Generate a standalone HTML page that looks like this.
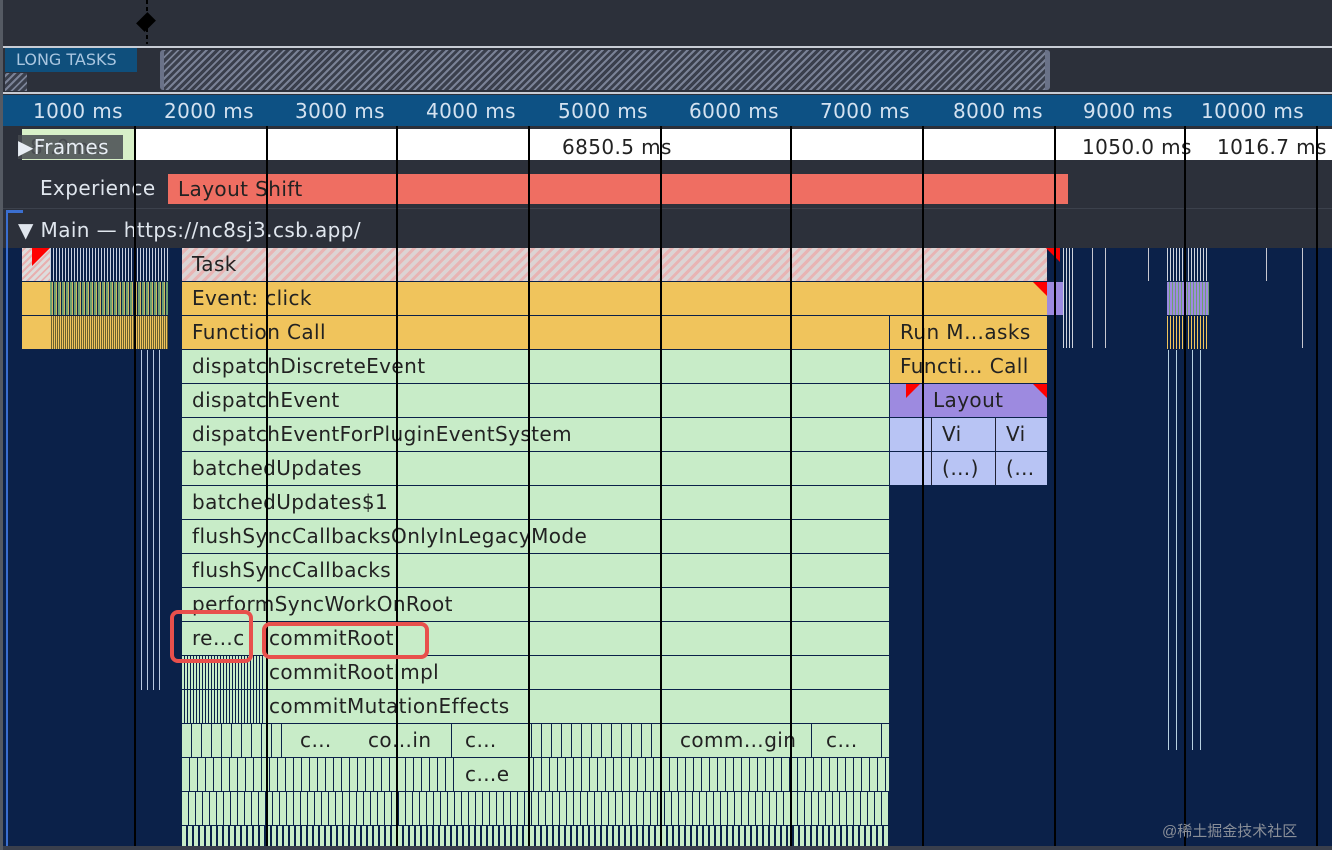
<!DOCTYPE html>
<html><head><meta charset="utf-8"><style>
*{margin:0;padding:0;box-sizing:border-box}
body{width:1332px;height:850px;overflow:hidden;background:#2c303a;font-family:"DejaVu Sans","Liberation Sans",sans-serif;position:relative;letter-spacing:0.4px}
.a{position:absolute}
.bar{position:absolute;height:33px;font-size:20px;line-height:33px;color:#222;padding-left:10px;white-space:nowrap;overflow:hidden}
.g{background:#c8ecc8}
.y{background:#f0c45c}
.p{background:#9d8ae0}
.lb{background:#b8c4f4}
.vl{position:absolute;top:126px;bottom:0;width:2px;background:#000}
.tick{position:absolute;top:95px;height:31px;line-height:33px;font-size:20px;color:#d4e2f0}
.st{background:repeating-linear-gradient(90deg,#c8ecc8 0 2px,#0b2149 2px 3px)}
</style></head><body>
<div class="a" style="left:0;top:0;width:3px;height:850px;background:#555a63"></div>
<div class="a" style="left:146px;top:0;width:2px;height:44px;background:repeating-linear-gradient(#000 0 4px,transparent 4px 7px)"></div>
<div class="a" style="left:138px;top:14px;width:16px;height:16px;background:#000;transform:rotate(45deg) scale(0.75,1)"></div>
<div class="a" style="left:3px;top:46px;width:1329px;height:2px;background:#c8ccd4"></div>
<div class="a" style="left:5px;top:48px;width:132px;height:24px;background:#0f4f7c;color:#a9c6e0;font-size:16px;line-height:24px;padding-left:11px;letter-spacing:0">LONG TASKS</div>
<div class="a" style="left:5px;top:73px;width:22px;height:18px;background:repeating-linear-gradient(-45deg,#7a8296 0 2px,#3a3f4c 2px 5px)"></div>
<div class="a" style="left:160px;top:50px;width:890px;height:40px;border-radius:3px;background:repeating-linear-gradient(-45deg,#7a8296 0 2px,#3a3f4c 2px 5px);border-left:4px solid #6a7288;border-right:5px solid #6a7288"></div>
<div class="a" style="left:3px;top:92px;width:1329px;height:2px;background:#c8ccd4"></div>
<div class="a" style="left:3px;top:95px;width:1329px;height:31px;background:#0d5184"></div>
<div class="tick" style="left:33px">1000 ms</div>
<div class="tick" style="left:164px">2000 ms</div>
<div class="tick" style="left:295px">3000 ms</div>
<div class="tick" style="left:426px">4000 ms</div>
<div class="tick" style="left:558px">5000 ms</div>
<div class="tick" style="left:689px">6000 ms</div>
<div class="tick" style="left:820px">7000 ms</div>
<div class="tick" style="left:953px">8000 ms</div>
<div class="tick" style="left:1083px">9000 ms</div>
<div class="tick" style="left:1201px">10000 ms</div>
<!-- frames -->
<div class="a" style="left:3px;top:126px;width:1329px;height:36px;background:#2c303a"></div>
<div class="a" style="left:22px;top:129px;width:113px;height:31px;background:#d8f0c8"></div>
<div class="a" style="left:135px;top:129px;width:1197px;height:31px;background:#fff"></div>
<div class="a" style="left:562px;top:129px;font-size:20px;line-height:36px;color:#222">6850.5 ms</div>
<div class="a" style="left:1082px;top:129px;font-size:20px;line-height:36px;color:#222">1050.0 ms</div>
<div class="a" style="left:1217px;top:129px;font-size:20px;line-height:36px;color:#222">1016.7 ms</div>
<div class="a" style="left:30px;top:129px;font-size:20px;line-height:36px;color:#555">8..0 ms</div>
<div class="a" style="left:18px;top:135px;width:105px;height:24px;background:rgba(70,74,80,.85)"></div>
<div class="a" style="left:18px;top:132px;font-size:20px;line-height:30px;color:#e8eef4">▶Frames</div>
<!-- experience -->
<div class="a" style="left:40px;top:172px;font-size:20px;line-height:33px;color:#e0e6ee">Experience</div>
<div class="bar" style="left:168px;top:174px;width:900px;height:30px;line-height:30px;background:#ef6e62">Layout Shift</div>
<div class="a" style="left:3px;top:208px;width:1329px;height:1px;background:#3c414c"></div>
<div class="a" style="left:7px;top:210px;width:16px;height:3px;background:#3b6fd0"></div>
<div class="a" style="left:18px;top:214px;font-size:20px;line-height:32px;color:#e0e6ee">▼ Main — https://nc8sj3.csb.app/</div>
<!-- flame -->
<div class="a" style="left:3px;top:248px;width:1329px;height:602px;background:#0b2149"></div>
<div class="a" style="left:6px;top:210px;width:2px;height:640px;background:#3b6fd0"></div>
<div class="a" style="left:22px;top:248px;width:28px;height:33px;background:repeating-linear-gradient(-45deg,#e8b0b0 0 2px,#ddd 2px 5px)"></div>
<div class="a" style="left:50px;top:248px;width:118px;height:33px;background:repeating-linear-gradient(90deg,#c8d0e0 0 1px,#0b2149 1px 3px)"></div>
<div class="a" style="left:22px;top:282px;width:28px;height:33px;background:#f0c45c"></div>
<div class="a" style="left:50px;top:282px;width:118px;height:33px;background:repeating-linear-gradient(90deg,#6fa070 0 2px,#d0b860 2px 3px,#0b2149 3px 4px)"></div>
<div class="a" style="left:22px;top:316px;width:28px;height:33px;background:#f0c45c"></div>
<div class="a" style="left:50px;top:316px;width:118px;height:33px;background:repeating-linear-gradient(90deg,#f0c45c 0 1px,#6a6030 1px 2px)"></div>
<div class="a" style="top:248px;width:0;height:0;border-top:18px solid #f00;border-left:18px solid transparent;transform:scaleX(-1);left:32px"></div>
<div class="a" style="left:135px;top:350px;width:28px;height:340px;background:repeating-linear-gradient(90deg,#b8c8e0 0 1px,#0b2149 1px 6px)"></div>
<!-- main column -->
<div class="bar" style="left:182px;top:248px;width:865px;background:repeating-linear-gradient(-45deg,#e8b4b4 0 3px,#dcd4d4 3px 7px)">Task</div>
<div class="bar y" style="left:182px;top:282px;width:865px">Event: click</div>
<div class="bar p" style="left:1047px;top:282px;width:16px"></div>
<div class="bar y" style="left:182px;top:316px;width:707px">Function Call</div>
<div class="bar y" style="left:890px;top:316px;width:157px">Run M…asks</div>
<div class="bar g" style="left:182px;top:350px;width:707px">dispatchDiscreteEvent</div>
<div class="bar y" style="left:890px;top:350px;width:157px">Functi… Call</div>
<div class="bar g" style="left:182px;top:384px;width:707px">dispatchEvent</div>
<div class="bar p" style="left:890px;top:384px;width:157px;padding-left:43px">Layout</div>
<div class="bar g" style="left:182px;top:418px;width:707px">dispatchEventForPluginEventSystem</div>
<div class="bar lb" style="left:890px;top:418px;width:157px"></div>
<div class="bar lb" style="left:931px;top:418px;width:63px;border-left:1px solid #223;">Vi</div>
<div class="bar lb" style="left:995px;top:418px;width:52px;border-left:1px solid #223;">Vi</div>
<div class="bar g" style="left:182px;top:452px;width:707px">batchedUpdates</div>
<div class="bar lb" style="left:890px;top:452px;width:157px"></div>
<div class="bar lb" style="left:931px;top:452px;width:63px;border-left:1px solid #223;">(…)</div>
<div class="bar lb" style="left:995px;top:452px;width:52px;border-left:1px solid #223;">(…</div>
<div class="bar g" style="left:182px;top:486px;width:707px">batchedUpdates$1</div>
<div class="bar g" style="left:182px;top:520px;width:707px">flushSyncCallbacksOnlyInLegacyMode</div>
<div class="bar g" style="left:182px;top:554px;width:707px">flushSyncCallbacks</div>
<div class="bar g" style="left:182px;top:588px;width:707px">performSyncWorkOnRoot</div>
<div class="bar g" style="left:182px;top:622px;width:707px"></div>
<div class="bar g" style="left:182px;top:622px;width:80px">re…c</div>
<div class="bar g" style="left:263px;top:622px;width:626px;padding-left:6px">commitRoot</div>
<div class="bar st" style="left:182px;top:656px;width:80px"></div>
<div class="bar g" style="left:263px;top:656px;width:626px;padding-left:6px">commitRootImpl</div>
<div class="bar st" style="left:182px;top:690px;width:80px"></div>
<div class="bar g" style="left:263px;top:690px;width:626px;padding-left:6px">commitMutationEffects</div>
<div class="bar st" style="left:182px;top:724px;width:707px;background:repeating-linear-gradient(90deg,#c8ecc8 0 9px,#0b2149 9px 10px)"></div>
<div class="bar g" style="left:290px;top:724px;width:64px">c…</div>
<div class="bar g" style="left:358px;top:724px;width:92px">co…in</div>
<div class="bar g" style="left:455px;top:724px;width:72px">c…</div>
<div class="bar g" style="left:670px;top:724px;width:140px">comm…gin</div>
<div class="bar g" style="left:816px;top:724px;width:60px">c…</div>
<div class="bar" style="left:182px;top:758px;width:707px;background:repeating-linear-gradient(90deg,#c8ecc8 0 7px,#0b2149 7px 8px)"></div>
<div class="bar g" style="left:455px;top:758px;width:72px">c…e</div>
<div class="bar" style="left:182px;top:792px;width:707px;background:repeating-linear-gradient(90deg,#c8ecc8 0 6px,#0b2149 6px 7px)"></div>
<div class="bar" style="left:182px;top:826px;width:707px;height:24px;background:repeating-linear-gradient(90deg,#c8ecc8 0 4px,#0b2149 4px 6px)"></div>
<!-- red triangles -->
<div class="a" style="left:1046px;top:248px;border-top:14px solid #f00;border-left:14px solid transparent"></div>
<div class="a" style="left:1033px;top:282px;border-top:14px solid #f00;border-left:14px solid transparent"></div>
<div class="a" style="left:1033px;top:384px;border-top:14px solid #f00;border-left:14px solid transparent"></div>
<div class="a" style="top:384px;border-top:14px solid #f00;border-right:14px solid transparent;left:906px"></div>
<!-- right sparse -->
<div class="a" style="left:1063px;top:248px;width:12px;height:100px;background:repeating-linear-gradient(90deg,#d0d4dc 0 1px,#0b2149 1px 3px)"></div>
<div class="a" style="left:1167px;top:248px;width:42px;height:33px;background:repeating-linear-gradient(90deg,#d0d4dc 0 1px,#0b2149 1px 3px)"></div>
<div class="a" style="left:1167px;top:282px;width:42px;height:33px;background:repeating-linear-gradient(90deg,#9d8ae0 0 2px,#6fa070 2px 3px)"></div>
<div class="a" style="left:1167px;top:316px;width:42px;height:33px;background:repeating-linear-gradient(90deg,#f0c45c 0 1px,#0b2149 1px 3px)"></div>
<div class="a" style="left:1168px;top:350px;width:36px;height:400px;background:repeating-linear-gradient(90deg,#b8d0e0 0 1px,transparent 1px 8px)"></div>
<div class="a" style="left:1092px;top:248px;width:1px;height:100px;background:#c8c8d0"></div>
<div class="a" style="left:1105px;top:248px;width:1px;height:100px;background:#c8c8d0"></div>
<div class="a" style="left:1148px;top:248px;width:1px;height:33px;background:#c8c8d0"></div>
<div class="a" style="left:1266px;top:248px;width:1px;height:33px;background:#c8c8d0"></div>
<div class="a" style="left:1302px;top:248px;width:1px;height:100px;background:#c8c8d0"></div>
<!-- vertical lines -->
<div class="vl" style="left:134px"></div><div class="vl" style="left:266px"></div><div class="vl" style="left:396px"></div><div class="vl" style="left:528px"></div><div class="vl" style="left:660px"></div><div class="vl" style="left:790px"></div><div class="vl" style="left:922px"></div><div class="vl" style="left:1054px"></div><div class="vl" style="left:1184px"></div><div class="vl" style="left:1316px"></div>
<!-- highlights -->
<div class="a" style="left:170px;top:610px;width:83px;height:53px;border:4px solid #e8504c;border-radius:8px"></div>
<div class="a" style="left:262px;top:622px;width:167px;height:37px;border:4px solid #e8504c;border-radius:8px"></div>
<div class="a" style="left:3px;top:846px;width:1329px;height:4px;background:#3a3f4c"></div>
<div class="a" style="left:1162px;top:820px;font-size:15px;color:#8a8f98;letter-spacing:0;font-family:'Liberation Sans','Noto Sans CJK SC',sans-serif">@稀土掘金技术社区</div>
</body></html>
